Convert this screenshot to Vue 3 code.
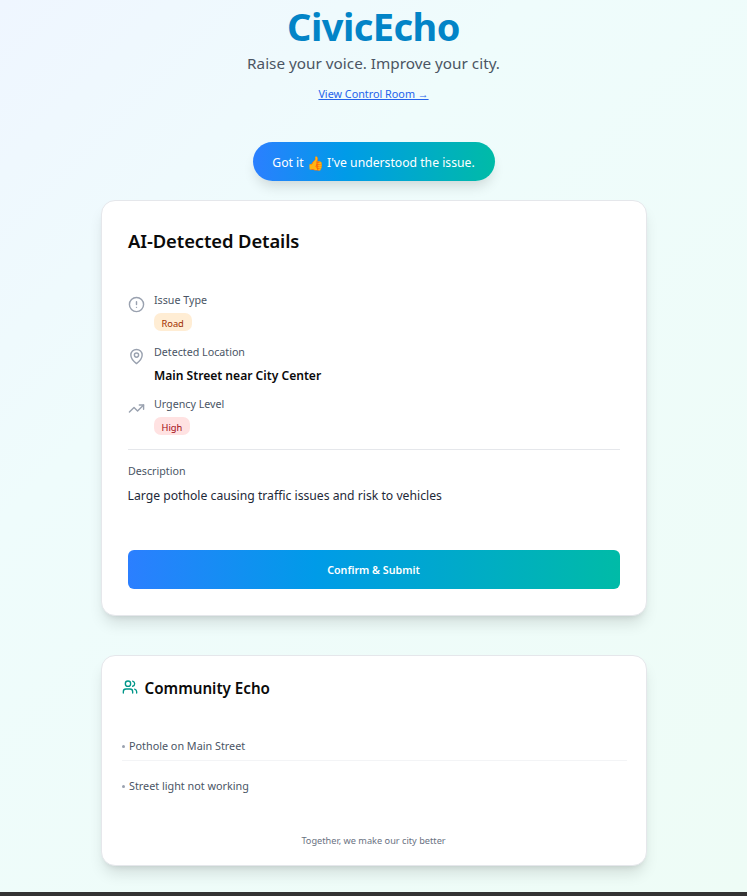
<template>
  <div class="page">
    <header class="head">
      <h1 class="brand">CivicEcho</h1>
      <p class="tag">Raise your voice. Improve your city.</p>
      <a class="link" href="#">View Control Room →</a>
    </header>
    <button class="pill">Got it <span class="thumb">👍</span> I've understood the issue.</button>

    <section class="card details">
      <h2 class="title">AI-Detected Details</h2>
      <div class="rows">
        <div class="row">
          <svg class="ico" viewBox="0 0 24 24"><circle cx="12" cy="12" r="10"/><path d="M12 8v4M12 16h.01"/></svg>
          <div class="col"><span class="lab">Issue Type</span><span class="badge road">Road</span></div>
        </div>
        <div class="row">
          <svg class="ico" viewBox="0 0 24 24"><path d="M20 10c0 6-8 12-8 12s-8-6-8-12a8 8 0 0 1 16 0Z"/><circle cx="12" cy="10" r="3"/></svg>
          <div class="col"><span class="lab">Detected Location</span><strong class="val">Main Street near City Center</strong></div>
        </div>
        <div class="row">
          <svg class="ico" viewBox="0 0 24 24"><path d="M22 7l-8.5 8.5-5-5L2 17"/><path d="M16 7h6v6"/></svg>
          <div class="col"><span class="lab">Urgency Level</span><span class="badge high">High</span></div>
        </div>
      </div>
      <div class="desc">
        <div class="lab">Description</div>
        <p class="desc-text">Large pothole causing traffic issues and risk to vehicles</p>
      </div>
      <button class="confirm">Confirm &amp; Submit</button>
    </section>

    <section class="card echo">
      <div class="echo-head">
        <svg class="people" viewBox="0 0 24 24"><path d="M16 21v-2a4 4 0 0 0-4-4H6a4 4 0 0 0-4 4v2"/><circle cx="9" cy="7" r="4"/><path d="M22 21v-2a4 4 0 0 0-3-3.87"/><path d="M16 3.13a4 4 0 0 1 0 7.75"/></svg>
        <h3 class="echo-title">Community Echo</h3>
      </div>
      <ul class="list">
        <li><span class="dot"></span>Pothole on Main Street</li>
        <li><span class="dot"></span>Street light not working</li>
      </ul>
      <p class="foot">Together, we make our city better</p>
    </section>
    <div class="bar"></div>
  </div>
</template>

<script setup>
</script>

<style>
html, body { margin: 0; padding: 0; }
</style>

<style scoped>
.page {
  height: 896px;
  box-sizing: border-box;
  overflow: hidden;
  display: flex;
  flex-direction: column;
  align-items: center;
  background: linear-gradient(135deg, #eff6ff 0%, #effcfc 32%, #eefcf6 100%);
  font-family: "Noto Sans", "Open Sans", sans-serif;
  color: #0a0a0a;
}
.head { display: flex; flex-direction: column; align-items: center; height: 142px; }
.brand { margin: 0; height: 52px; line-height: 52px; font-size: 38px; font-weight: 700; color: #0284c7; letter-spacing: -0.55px; }
.tag { margin: 0; height: 23px; line-height: 23px; font-size: 15.3px; color: #4b5563; }
.link { margin-top: 12px; font-size: 10.8px; line-height: 14px; color: #2563eb; text-decoration: underline; }
.pill {
  width: 242px; height: 39px; border: 0; padding: 1px 0 0; border-radius: 20px;
  background: linear-gradient(90deg, #2b7fff 0%, #009be8 38%, #00bba7 100%);
  color: #fff; font: 12.2px "Noto Sans", sans-serif; white-space: nowrap;
  box-shadow: 0 8px 14px -4px rgba(0,0,0,.16);
}
.thumb { font-size: 13.5px; line-height: 14px; vertical-align: -1px; filter: hue-rotate(-20deg) saturate(1.4); }
.card {
  width: 546px; box-sizing: border-box; background: #fff; border: 1px solid #e5e7eb; border-radius: 14px;
  box-shadow: 0 10px 15px -3px rgba(0,0,0,.12), 0 4px 6px -4px rgba(0,0,0,.12);
}
.details { height: 416px; margin-top: 19px; padding: 26px; display: flex; flex-direction: column; }
.title { margin: 0; height: 28px; line-height: 28px; font-size: 18.4px; font-weight: 600; letter-spacing: -0.1px; padding-left: .5px; }
.rows { margin-top: 38px; display: flex; flex-direction: column; gap: 16px; }
.row { display: flex; gap: 9px; height: 36px; }
.ico { width: 17px; height: 17px; margin-top: 3px; fill: none; stroke: #99a1af; stroke-width: 2; stroke-linecap: round; stroke-linejoin: round; }
.col { display: flex; flex-direction: column; align-items: flex-start; }
.lab { font-size: 10.7px; line-height: 14px; color: #4a5565; padding-left: .5px; }
.badge { margin-top: 6px; height: 18px; line-height: 21px; padding: 0 8px; border-radius: 7px; font-size: 9.3px; }
.road { background: #ffedd4; color: #9f2d00; }
.high { background: #ffe2e2; color: #9f0712; }
.val { margin-top: 8px; line-height: 17px; font-size: 12.1px; font-weight: 600; padding-left: .5px; }
.desc { margin-top: 16px; border-top: 1px solid #e5e7eb; padding-top: 14px; }
.desc-text { margin: 9px 0 0; font-size: 12.2px; line-height: 18px; color: #1e2939; }
.confirm {
  margin-top: 45px; height: 39px; border: 0; border-radius: 6px; padding: 0;
  background: linear-gradient(90deg, #2b7fff 0%, #009be8 38%, #00bba7 100%);
  color: #fff; font: 600 10.7px "Noto Sans", sans-serif;
}
.echo { height: 211px; margin-top: 39px; padding: 20px; display: flex; flex-direction: column; }
.echo-head { display: flex; align-items: center; gap: 7px; height: 22px; margin-top: 1px; }
.people { width: 16px; height: 16px; margin-top: -3px; fill: none; stroke: #009689; stroke-width: 2; stroke-linecap: round; stroke-linejoin: round; }
.echo-title { margin: 0; font-size: 15.2px; font-weight: 600; line-height: 22px; }
.list { list-style: none; margin: 37px 0 0; padding: 0; width: 505px; }
.list li { height: 40px; box-sizing: border-box; padding-top: 2px; line-height: 16px; font-size: 10.8px; color: #4a5565; }
.list li:first-child { height: 25px; border-bottom: 1px solid #f3f4f6; }
.list li:last-child { padding-top: 17px; }
.dot { display: inline-block; width: 3px; height: 3px; border-radius: 50%; background: #99a1af; margin-right: 4.5px; vertical-align: 2px; }
.foot { margin: 34px 0 0; text-align: center; font-size: 9.2px; line-height: 12px; color: #6a7282; }
.bar { position: absolute; left: 0; top: 892px; width: 100%; height: 4px; background: #333; }
</style>
